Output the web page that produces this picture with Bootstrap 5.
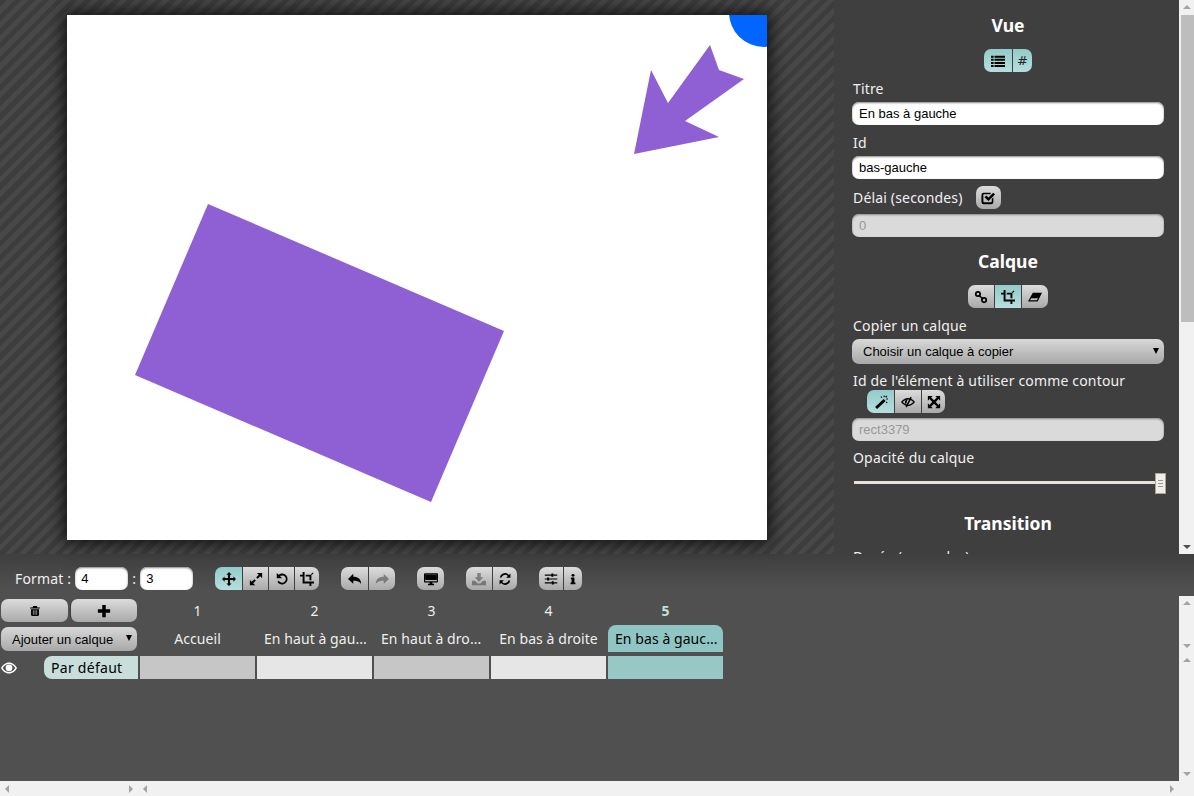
<!DOCTYPE html>
<html lang="fr">
<head>
    <meta charset="UTF-8">
    <meta name="viewport" content="width=device-width, initial-scale=1.0">
    <title>Sozi</title>
    <link href="https://cdn.jsdelivr.net/npm/bootstrap@5.3.0/dist/css/bootstrap.min.css" rel="stylesheet">
    <style>
        html, body { height: 796px; overflow: hidden; }
        body { background: #505050; color: #f0f0f0; font-family: "Noto Sans", sans-serif; font-size: 14px; }
        .top-area { height: 554px; }
        .stage { width: 834px; padding-top: 15px; background: repeating-linear-gradient(135deg, #3d3d3d 0 5px, #484848 5px 10px); }
        .sheet { display: block; width: 700px; height: 525px; background: #fff; box-shadow: 0 0 16px 3px #111; }
        .side { width: 345px; background: #3f3f3f; padding: 12px 15px 0 18px; overflow: hidden; }
        .side-title { font-size: 17.5px; font-weight: 700; line-height: 26px; text-align: center; margin: 0; color: #fff; }
        .side-label { display: block; line-height: 20px; margin: 0; padding-left: 1px; letter-spacing: .012em; }
        .mt-label { margin-top: 7px; margin-bottom: 3px; }
        .mt-label2 { margin-top: 8px; margin-bottom: 3px; }
        .mt-view { margin-top: 11px; }
        .mt-field { margin-top: 5px; }
        .sec-title { margin-top: 11px; }
        .mt-calque { margin-top: 11px; }
        .trans-title { margin-top: 16px; }
        .dur-label { margin-top: 11px; }

        .btn-group { --bs-border-width: 0; }
        .tool-btn { --bs-btn-padding-x: 0; --bs-btn-padding-y: 0; height: 23px; width: 26px; border: 0; border-radius: 7px; display: flex; align-items: center; justify-content: center; color: #222; font: 400 13px "DejaVu Sans", sans-serif; background: linear-gradient(#dcdcdc, #a9a9a9); }
        .tool-btn:hover { color: #222; background: linear-gradient(#dcdcdc, #a9a9a9); }
        .tool-btn + .tool-btn { border-left: 1px solid #3f3f3f; }
        .tool-btn.on, .tool-btn.on:hover { background: linear-gradient(#93cbca, #b6dedd); }
        .tool-btn.off svg { opacity: .35; }
        .tool-btn svg { width: 14px; height: 14px; fill: #000; flex: none; }
        .btn-group > .tool-btn { flex: 0 0 auto; border-radius: 0; }
        .btn-group > .tool-btn:first-child { border-radius: 7px 0 0 7px; margin: 0; }
        .btn-group > .tool-btn:last-child { border-radius: 0 7px 7px 0; }
        .btn-group > .tool-btn:only-child { border-radius: 7px; }
        .bw-19 { width: 19px; }
        .bw-20 { width: 20px; }
        .bw-24 { width: 24px; }
        .bw-25 { width: 25px; }
        .bw-27 { width: 27px; }
        .bw-28 { width: 28px; }

        .field { display: block; width: 100%; height: 23px; padding: 0 7px; border: 0; border-radius: 7px; font: 13px "Liberation Sans", sans-serif; color: #000; background: #fff; box-shadow: inset 0 1px 2px #888; min-height: 0; }
        .field:focus { box-shadow: inset 0 1px 2px #888; }
        .field:disabled { background: #dadada; color: #999; opacity: 1; }
        .pick { height: 25px; padding: 0 11px; appearance: none; background: linear-gradient(#d8d8d8, #a8a8a8); box-shadow: none; }
        .pick-wrap { position: relative; }
        .pick-arrow { position: absolute; right: 5px; top: 9px; width: 0; height: 0; border-style: solid; border-width: 6px 3px 0; border-color: #000 transparent transparent; pointer-events: none; }
        .h-row { height: 23px; margin-top: 7px; }
        .delay-btn { width: 25px; margin-left: 13px; }
        .group-indent { margin-left: 15px; margin-top: -4px; }

        .slider { height: 21px; margin-top: 5px; position: relative; }
        .slider-track { height: 3px; margin: 8px 0 0 2px; width: 304px; background: #e8e1da; position: absolute; }
        .slider-grip { position: absolute; left: 303px; top: 0; width: 11px; height: 21px; background: #f1ede8; border: 1px solid #aaa396; display: flex; flex-direction: column; gap: 2px; justify-content: center; align-items: center; }
        .slider-grip i { display: block; width: 5px; height: 1px; background: #999; }

        .vbar { width: 15px; flex: 0 0 15px; background: #f1f1f1; display: flex; flex-direction: column; align-items: center; justify-content: space-between; padding: 5px 0; position: relative; }
        .hbar { height: 15px; background: #f1f1f1; display: flex; align-items: center; justify-content: space-between; padding: 0 5px; }
        .up, .down, .lft, .rgt { width: 0; height: 0; display: block; border-style: solid; border-color: transparent; }
        .up { border-width: 0 4px 4px; border-bottom-color: #a3a3a3; }
        .down { border-width: 4px 4px 0; border-top-color: #a3a3a3; }
        .lft { border-width: 4px 4px 4px 0; border-right-color: #a3a3a3; }
        .rgt { border-width: 4px 0 4px 4px; border-left-color: #a3a3a3; }
        .down.dark { border-top-color: #505050; }
        .thumb { position: absolute; left: 2px; right: 0; top: 15px; width: 13px; height: 307px; background: #bdbdbd; }

        .bottom { height: 242px; background: linear-gradient(#3f3f3f, #505050 36px); }
        .toolbar { height: 42px; padding: 13px 0 0 15px; gap: 22px; }
        .fmt { width: 53px; padding: 0 6px; }
        .fmt-wrap { gap: 4px; letter-spacing: .012em; }
        .tl-head { height: 57px; }
        .tl-left { width: 140px; flex: 0 0 140px; padding: 3px 0 0 1px; }
        .tl-main { flex: 1 1 auto; }
        .del-row { gap: 2px; }
        .del-btn { width: 67px; }
        .tl-cols { padding-top: 3px; }
        .tl-col { width: 115px; margin-right: 2px; text-align: center; }
        .tl-num { height: 23px; line-height: 24px; color: #eee; }
        .tl-name { height: 27px; margin-top: 3px; line-height: 28px; white-space: nowrap; color: #eee; letter-spacing: .005em; }
        .tl-cut { text-align: left; padding-left: 7px; }
        .tl-col.sel .tl-num { font-weight: 700; color: #bfe0dd; }
        .tl-col.sel .tl-name { background: #8fc6c4; color: #000; border-radius: 8px 8px 0 0; }
        .add-layer { width: 136px; height: 24px; font-size: 13px; }
        .add-wrap { margin-top: 5px; width: 136px; }
        .add-wrap .pick-arrow { top: 8px; }
        .tl-body { height: 128px; }
        .row-line { padding-top: 3px; }
        .eye-cell { width: 44px; flex: 0 0 44px; height: 23px; padding-left: 1px; display: flex; align-items: center; }
        .eye-cell svg { width: 16px; height: 14px; fill: #fff; }
        .layer-name { width: 94px; height: 23px; margin-right: 2px; background: #c7dedb; color: #000; border-radius: 8px 0 0 8px; line-height: 24px; padding-left: 7px; letter-spacing: .02em; }
        .cell { width: 115px; height: 23px; margin-right: 2px; }
        .cell-a { background: #c6c6c6; }
        .cell-b { background: #e6e6e6; }
        .cell-c { background: #97c8c6; }
        .hbar-left { width: 138px; }
        .hbar-right { flex: 1 1 auto; }
        .corner { width: 15px; background: #f1f1f1; }
    </style>
</head>
<body>
    <svg width="0" height="0" class="d-block">
        <symbol id="i-list" viewBox="0 0 16 16"><path d="M0 2h3v2.300H0zM4 2h12v2.300H4zM0 5.500h3v2.300H0zM4 5.500h12v2.300H4zM0 9h3v2.300H0zM4 9h12v2.300H4zM0 12.500h3v2.300H0zM4 12.500h12v2.300H4z"/></symbol>
        <symbol id="i-check" viewBox="0 0 16 16"><path d="M3 2h8v1.800H3.500a1 1 0 0 0-.8.800v7.400a1 1 0 0 0 .8.800h8a.8.800 0 0 0 .8-.8V9l1.800-1.800V12.500a2.500 2.500 0 0 1-2.500 2.500H3a2.500 2.500 0 0 1-2.500-2.500v-8A2.500 2.500 0 0 1 3 2z"/><path d="M4 7l2-2 2.500 2.500L14 2l2 2-7.500 7.500z"/></symbol>
        <symbol id="i-link" viewBox="0 0 16 16"><path fill-rule="evenodd" d="M4.500 1a3.500 3.500 0 1 1 0 7 3.500 3.500 0 0 1 0-7zm0 2a1.500 1.500 0 1 0 0 3 1.500 1.500 0 0 0 0-3zM11.500 8a3.500 3.500 0 1 1 0 7 3.500 3.500 0 0 1 0-7zm0 2a1.500 1.500 0 1 0 0 3 1.500 1.500 0 0 0 0-3z"/><path d="M6 5l5 5-1.200 1.200-5-5z"/></symbol>
        <symbol id="i-crop" viewBox="0 0 16 16"><path d="M3 0h2.200v10.800H16V13h-3v3h-2.200v-3H3V5.200H0V3h3zM6.500 3H13v6.500h-2.200V5.200H6.500zM14.500 .5l1 1-2 2-1-1z"/></symbol>
        <symbol id="i-eraser" viewBox="0 0 16 16"><path fill-rule="evenodd" d="M5.500 3H16L11 13H0zM3.700 9.300 2.200 11.700h7.900l1.300-2.400z"/></symbol>
        <symbol id="i-magic" viewBox="0 0 16 16"><path d="M11 4.500l2.300 2.300L3.500 16l-2.300-2.300zM11 .5h1.200v2H11zM14 4h2v1.200h-2zM7.500 2l1-.7 1 1.500-1 .7zM14 .7l1.200 1.200-1.200 1.200-1.200-1.200zM13.500 8l1-.6 1 1.500-1 .6z"/></symbol>
        <symbol id="i-eyeoff" viewBox="0 0 16 16"><path fill-rule="evenodd" d="M8 3.500c3.200 0 6.300 2 8 4.500-1.700 2.500-4.800 4.500-8 4.500S1.700 10.500 0 8c1.700-2.500 4.800-4.500 8-4.500zM8 5C5.900 5 3.500 6.200 2 8c1.500 1.800 3.900 3 6 3s4.500-1.200 6-3c-1.500-1.800-3.900-3-6-3z"/><path d="M7.500 4.800A3.300 3.300 0 0 0 5.800 10.800z"/><path d="M10.800 2l1.500.8-5.600 11.400-1.500-.8z"/></symbol>
        <symbol id="i-full" viewBox="0 0 16 16"><path d="M1 1h5.500L4.700 2.800 8 6 11.300 2.800 9.500 1H15v5.500l-1.800-1.800L10 8l3.200 3.300 1.800-1.800V15H9.500l1.800-1.800L8 10l-3.300 3.200L6.500 15H1V9.500l1.800 1.800L6 8 2.800 4.700 1 6.500z"/></symbol>
        <symbol id="i-move" viewBox="0 0 16 16"><path d="M8 0l3 3H9.200v3.800H13V5l3 3-3 3V9.200H9.200V13H11l-3 3-3-3h1.800V9.200H3V11L0 8l3-3v1.800h3.800V3H5z"/></symbol>
        <symbol id="i-resize" viewBox="0 0 16 16"><path d="M9 1h6v6l-2.200-2.200-3 3-1.600-1.600 3-3zM7 15H1V9l2.200 2.200 3-3 1.600 1.600-3 3z"/></symbol>
        <symbol id="i-rotate" viewBox="0 0 16 16"><path d="M2 1l2.200 2.200A6.200 6.200 0 1 1 2.700 11l1.800-.9A4.200 4.200 0 1 0 5.700 4.700L8 7H2z"/></symbol>
        <symbol id="i-undo" viewBox="0 0 16 16"><path d="M6 2v3.500c5.500 0 9 2.500 9 8.500-1.500-3-4-4-9-4v3.500L0 8z"/></symbol>
        <symbol id="i-redo" viewBox="0 0 16 16"><path d="M10 2v3.500C4.500 5.500 1 8 1 14c1.500-3 4-4 9-4v3.500L16 8z"/></symbol>
        <symbol id="i-screen" viewBox="0 0 16 16"><path fill-rule="evenodd" d="M1.200 1.500h13.600c.7 0 1.200.5 1.200 1.200v8.100c0 .7-.5 1.200-1.200 1.200H9.500v1.500h2V15h-7v-1.500h2V12H1.200C.5 12 0 11.500 0 10.800V2.700c0-.7.500-1.200 1.200-1.200zM1.300 2.800v7.900h13.400V2.800z"/><path d="M1.300 2.800h13.400v6.400H1.300z"/></symbol>
        <symbol id="i-save" viewBox="0 0 16 16"><path d="M6 1h4v5h3l-5 5-5-5h3zM0 10h3.500l3 3h3l3-3H16v5H0z"/></symbol>
        <symbol id="i-sync" viewBox="-1 -1 18 18"><path d="M15 1v5.500H9.500l2.200-2.200A4.800 4.800 0 0 0 3.500 6H1.200a7 7 0 0 1 12-3.300zM1 15V9.500h5.500l-2.200 2.200A4.800 4.800 0 0 0 12.500 10h2.300a7 7 0 0 1-12 3.300z"/></symbol>
        <symbol id="i-sliders" viewBox="-1 -1 18 18"><path d="M0 2.300h8.500V1H11v1.300h5v1.400h-5V5H8.500V3.700H0zM0 7.300h3V6h2.500v1.300H16v1.400H5.500V10H3V8.700H0zM0 12.300h9V11h2.500v1.300H16v1.400h-4.500V15H9v-1.300H0z"/></symbol>
        <symbol id="i-info" viewBox="-2 -1 20 18"><circle cx="8" cy="2.800" r="2.100"/><path d="M5 6h5v7h1.500v2.500h-7V13H6V8.500H5z"/></symbol>
        <symbol id="i-trash" viewBox="-2 -1 20 18"><path d="M5.500 1h5l1 2H15v1.500H1V3h3.500zM2.300 5.500h11.400v8c0 1-.7 1.700-1.500 1.700H3.800c-.8 0-1.500-.7-1.500-1.700zM5 7v6.500h1V7zM7.500 7v6.500h1V7zM10 7v6.500h1V7z" fill-rule="evenodd"/></symbol>
        <symbol id="i-plus" viewBox="0 0 16 16"><path d="M6 1h4v5h5v4h-5v5H6v-5H1V6h5z"/></symbol>
        <symbol id="i-eye" viewBox="0 0 16 14"><path fill-rule="evenodd" d="M8 1.500c3.500 0 6.500 2.500 8 5.500-1.500 3-4.500 5.500-8 5.500S1.500 10 0 7c1.500-3 4.500-5.500 8-5.500zM8 3C5.700 3 3.200 4.600 1.700 7c1.500 2.400 4 4 6.300 4s4.800-1.600 6.300-4C12.800 4.600 10.300 3 8 3z"/><circle cx="8" cy="6.800" r="3.400"/></symbol>
    </svg>

    <div class="top-area d-flex">
        <div class="stage d-flex justify-content-center">
            <svg class="sheet" viewBox="67 15 700 525">
                <polygon fill="#8e60d4" points="208,204 504,331 431,502 135,375"/>
                <polygon fill="#8e60d4" points="634,154 651,70 668,103 710,45 719,70 744,79 685,121 719,137"/>
                <circle fill="#0066ff" cx="764" cy="12" r="35"/>
            </svg>
        </div>
        <div class="side">
            <h2 class="side-title">Vue</h2>
            <div class="d-flex justify-content-center mt-view">
                <div class="btn-group">
                    <button class="btn tool-btn on bw-28"><svg><use href="#i-list"/></svg></button>
                    <button class="btn tool-btn on bw-20">#</button>
                </div>
            </div>
            <label class="side-label mt-label">Titre</label>
            <input class="form-control field" value="En bas à gauche">
            <label class="side-label mt-label2">Id</label>
            <input class="form-control field" value="bas-gauche">
            <div class="d-flex align-items-center h-row">
                <span class="side-label">Délai (secondes)</span>
                <button class="btn tool-btn delay-btn"><svg><use href="#i-check"/></svg></button>
            </div>
            <input class="form-control field mt-field" value="0" disabled>

            <h2 class="side-title sec-title">Calque</h2>
            <div class="d-flex justify-content-center mt-calque">
                <div class="btn-group">
                    <button class="btn tool-btn"><svg><use href="#i-link"/></svg></button>
                    <button class="btn tool-btn on bw-27"><svg><use href="#i-crop"/></svg></button>
                    <button class="btn tool-btn bw-27"><svg><use href="#i-eraser"/></svg></button>
                </div>
            </div>
            <label class="side-label mt-label2">Copier un calque</label>
            <div class="pick-wrap">
                <select class="form-select field pick"><option>Choisir un calque à copier</option></select>
                <span class="pick-arrow"></span>
            </div>
            <label class="side-label mt-label">Id de l'élément à utiliser comme contour</label>
            <div class="d-flex group-indent">
                <div class="btn-group">
                    <button class="btn tool-btn on bw-27"><svg><use href="#i-magic"/></svg></button>
                    <button class="btn tool-btn bw-27"><svg><use href="#i-eyeoff"/></svg></button>
                    <button class="btn tool-btn bw-24"><svg><use href="#i-full"/></svg></button>
                </div>
            </div>
            <input class="form-control field mt-field" value="rect3379" disabled>
            <label class="side-label mt-label">Opacité du calque</label>
            <div class="slider">
                <div class="slider-track"></div>
                <div class="slider-grip"><i></i><i></i><i></i></div>
            </div>
            <h2 class="side-title trans-title">Transition</h2>
            <label class="side-label dur-label">Durée (secondes)</label>
        </div>
        <div class="vbar">
            <span class="up"></span>
            <span class="thumb"></span>
            <span class="down dark"></span>
        </div>
    </div>

    <div class="bottom">
        <div class="toolbar d-flex align-items-start">
            <div class="d-flex align-items-center fmt-wrap">
                <span>Format :</span>
                <input class="form-control field fmt" value="4">
                <span>:</span>
                <input class="form-control field fmt" value="3">
            </div>
            <div class="btn-group">
                <button class="btn tool-btn on bw-27"><svg><use href="#i-move"/></svg></button>
                <button class="btn tool-btn"><svg><use href="#i-resize"/></svg></button>
                <button class="btn tool-btn"><svg><use href="#i-rotate"/></svg></button>
                <button class="btn tool-btn bw-25"><svg><use href="#i-crop"/></svg></button>
            </div>
            <div class="btn-group">
                <button class="btn tool-btn bw-27"><svg><use href="#i-undo"/></svg></button>
                <button class="btn tool-btn off bw-27"><svg><use href="#i-redo"/></svg></button>
            </div>
            <div class="btn-group">
                <button class="btn tool-btn bw-27"><svg><use href="#i-screen"/></svg></button>
            </div>
            <div class="btn-group">
                <button class="btn tool-btn off"><svg><use href="#i-save"/></svg></button>
                <button class="btn tool-btn bw-25"><svg><use href="#i-sync"/></svg></button>
            </div>
            <div class="btn-group">
                <button class="btn tool-btn bw-24"><svg><use href="#i-sliders"/></svg></button>
                <button class="btn tool-btn bw-19"><svg><use href="#i-info"/></svg></button>
            </div>
        </div>

        <div class="tl-head d-flex">
            <div class="tl-left">
                <div class="d-flex del-row">
                    <button class="btn tool-btn del-btn"><svg><use href="#i-trash"/></svg></button>
                    <button class="btn tool-btn del-btn"><svg><use href="#i-plus"/></svg></button>
                </div>
                <div class="pick-wrap add-wrap">
                    <select class="form-select field pick add-layer"><option>Ajouter un calque</option></select>
                    <span class="pick-arrow"></span>
                </div>
            </div>
            <div class="tl-main d-flex tl-cols">
                <div class="tl-col"><div class="tl-num">1</div><div class="tl-name">Accueil</div></div>
                <div class="tl-col"><div class="tl-num">2</div><div class="tl-name tl-cut">En haut à gau...</div></div>
                <div class="tl-col"><div class="tl-num">3</div><div class="tl-name tl-cut">En haut à dro...</div></div>
                <div class="tl-col"><div class="tl-num">4</div><div class="tl-name">En bas à droite</div></div>
                <div class="tl-col sel"><div class="tl-num">5</div><div class="tl-name tl-cut">En bas à gauc...</div></div>
            </div>
            <div class="vbar"><span class="up"></span><span class="down"></span></div>
        </div>

        <div class="tl-body d-flex">
            <div class="tl-main d-flex align-items-start row-line">
                <div class="eye-cell"><svg><use href="#i-eye"/></svg></div>
                <div class="layer-name">Par défaut</div>
                <div class="cell cell-a"></div>
                <div class="cell cell-b"></div>
                <div class="cell cell-a"></div>
                <div class="cell cell-b"></div>
                <div class="cell cell-c"></div>
            </div>
            <div class="vbar"><span class="up"></span><span class="down"></span></div>
        </div>

        <div class="d-flex">
            <div class="hbar hbar-left"><span class="lft"></span><span class="rgt"></span></div>
            <div class="hbar hbar-right"><span class="lft"></span><span class="rgt"></span></div>
            <div class="corner"></div>
        </div>
    </div>

    <script src="https://cdn.jsdelivr.net/npm/bootstrap@5.3.0/dist/js/bootstrap.bundle.min.js"></script>
</body>
</html>
